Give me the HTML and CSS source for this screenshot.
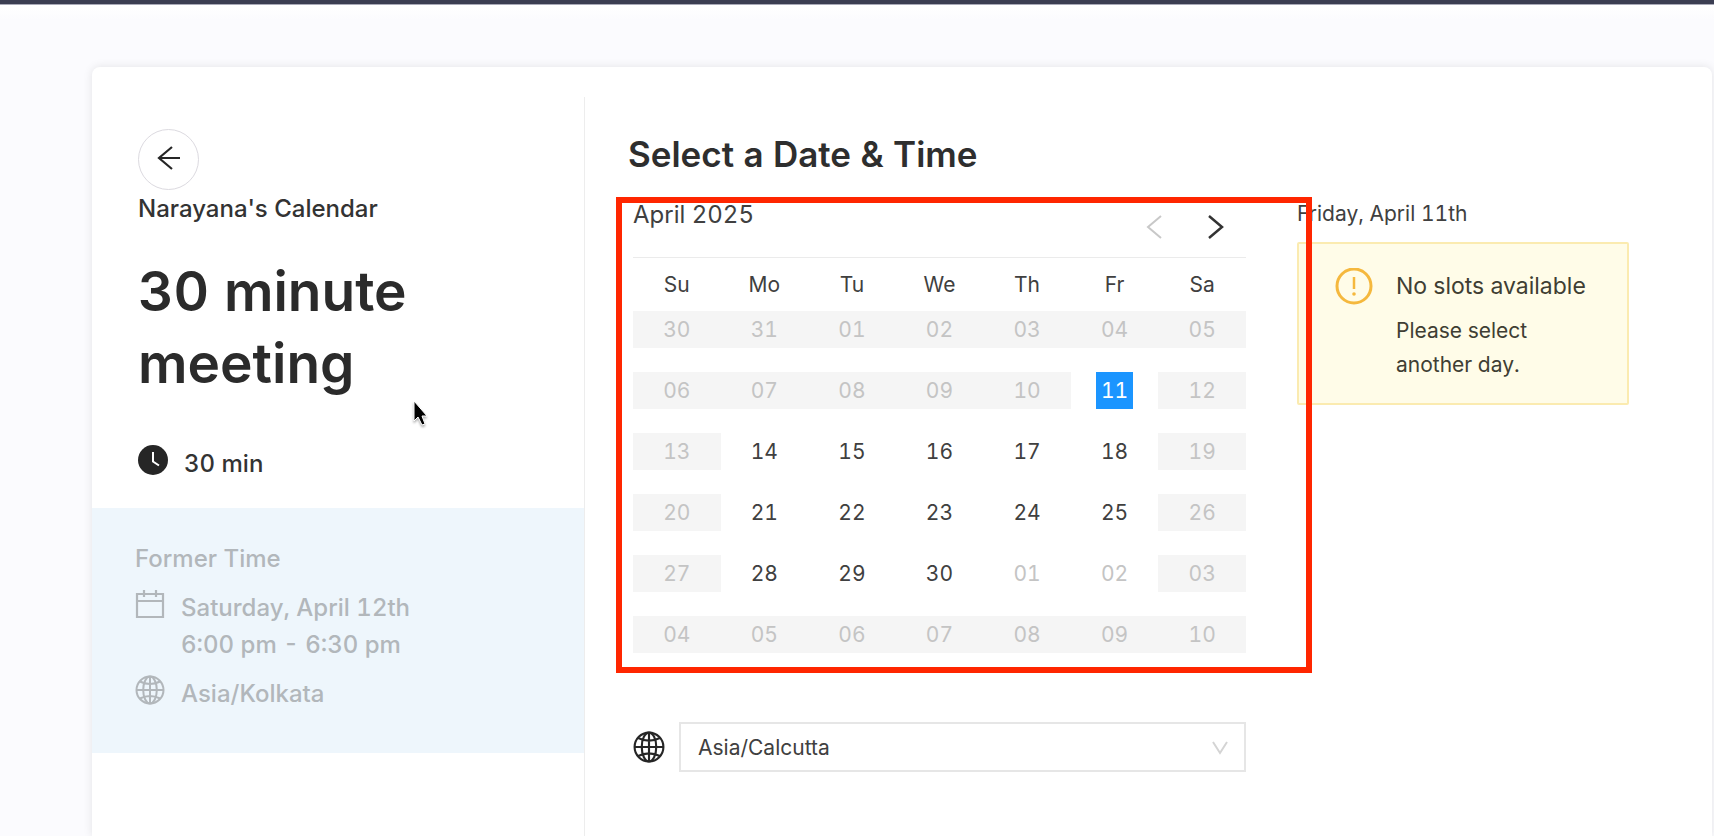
FILE: index.html
```html
<!DOCTYPE html>
<html lang="en">
<head>
  <meta charset="UTF-8" />
  <meta name="viewport" content="width=device-width, initial-scale=1" />
  <title>Select a Date &amp; Time</title>
  <link rel="stylesheet" href="styles.css">
</head>
<body>

  <!-- Shared icons -->
  <svg class="sprite" aria-hidden="true">
    <symbol id="icon-globe" viewBox="0 0 30 30">
      <g fill="none" stroke="currentColor" stroke-width="2">
        <circle cx="15" cy="15" r="13.5"/>
        <ellipse cx="15" cy="15" rx="6.8" ry="13.5"/>
        <path d="M15 1.5v27M1.5 15h27M4.8 6.5Q15 11.5 25.2 6.5M4.8 23.5Q15 18.5 25.2 23.5"/>
      </g>
    </symbol>
  </svg>

  <div class="top-bar"></div>

  <main class="card">
    <aside class="details">
      <div class="event">
        <button class="back-btn" aria-label="Back">
          <svg width="26" height="26" viewBox="0 0 26 26" fill="none" stroke="currentColor" stroke-width="2.200">
            <path d="M24 13H3M16 2L3 13l13 11"/>
          </svg>
        </button>
        <p class="owner">Narayana's Calendar</p>
        <h1>30 minute meeting</h1>
        <div class="duration">
          <svg width="30" height="30" viewBox="0 0 30 30">
            <circle cx="15" cy="15" r="15" fill="#262626"/>
            <path d="M15 7v9.500l6 4" fill="none" stroke="#fff" stroke-width="2"/>
          </svg>
          <span>30 min</span>
        </div>
      </div>

      <section class="former">
        <h2>Former Time</h2>
        <div class="former-row">
          <svg width="30" height="30" viewBox="0 0 30 30" fill="none" stroke="currentColor" stroke-width="2.200">
            <path d="M2 5h26v23H2zM2 12h26M9 1v7M21 1v7"/>
          </svg>
          <p>Saturday, April 12th<br>6:00 pm - 6:30 pm</p>
        </div>
        <div class="former-row">
          <svg width="30" height="30"><use href="#icon-globe"/></svg>
          <p>Asia/Kolkata</p>
        </div>
      </section>
    </aside>

    <section class="picker">
      <h2 class="picker-title">Select a Date &amp; Time</h2>

      <div class="picker-body">
        <div class="calendar-col">
          <div class="calendar">
            <div class="calendar-header">
              <span class="month">April 2025</span>
              <div class="arrows">
                <button aria-label="Previous month" disabled>
                  <svg width="16" height="24" viewBox="0 0 16 24" fill="none" stroke="currentColor" stroke-width="2"><path d="M15 1L2 12l13 11"/></svg>
                </button>
                <button aria-label="Next month">
                  <svg width="16" height="24" viewBox="0 0 16 24" fill="none" stroke="currentColor" stroke-width="2.500"><path d="M1 1l13 11L1 23"/></svg>
                </button>
              </div>
            </div>

            <table>
              <thead>
                <tr><th>Su</th><th>Mo</th><th>Tu</th><th>We</th><th>Th</th><th>Fr</th><th>Sa</th></tr>
              </thead>
              <tbody>
                <tr>
                  <td><button class="day off" disabled>30</button></td>
                  <td><button class="day off" disabled>31</button></td>
                  <td><button class="day off" disabled>01</button></td>
                  <td><button class="day off" disabled>02</button></td>
                  <td><button class="day off" disabled>03</button></td>
                  <td><button class="day off" disabled>04</button></td>
                  <td><button class="day off" disabled>05</button></td>
                </tr>
                <tr>
                  <td><button class="day off" disabled>06</button></td>
                  <td><button class="day off" disabled>07</button></td>
                  <td><button class="day off" disabled>08</button></td>
                  <td><button class="day off" disabled>09</button></td>
                  <td><button class="day off" disabled>10</button></td>
                  <td><button class="day selected">11</button></td>
                  <td><button class="day off" disabled>12</button></td>
                </tr>
                <tr>
                  <td><button class="day off" disabled>13</button></td>
                  <td><button class="day">14</button></td>
                  <td><button class="day">15</button></td>
                  <td><button class="day">16</button></td>
                  <td><button class="day">17</button></td>
                  <td><button class="day">18</button></td>
                  <td><button class="day off" disabled>19</button></td>
                </tr>
                <tr>
                  <td><button class="day off" disabled>20</button></td>
                  <td><button class="day">21</button></td>
                  <td><button class="day">22</button></td>
                  <td><button class="day">23</button></td>
                  <td><button class="day">24</button></td>
                  <td><button class="day">25</button></td>
                  <td><button class="day off" disabled>26</button></td>
                </tr>
                <tr>
                  <td><button class="day off" disabled>27</button></td>
                  <td><button class="day">28</button></td>
                  <td><button class="day">29</button></td>
                  <td><button class="day">30</button></td>
                  <td><button class="day next-month">01</button></td>
                  <td><button class="day next-month">02</button></td>
                  <td><button class="day off" disabled>03</button></td>
                </tr>
                <tr>
                  <td><button class="day off" disabled>04</button></td>
                  <td><button class="day off" disabled>05</button></td>
                  <td><button class="day off" disabled>06</button></td>
                  <td><button class="day off" disabled>07</button></td>
                  <td><button class="day off" disabled>08</button></td>
                  <td><button class="day off" disabled>09</button></td>
                  <td><button class="day off" disabled>10</button></td>
                </tr>
              </tbody>
            </table>
            <div class="highlight"></div>
          </div>

          <div class="timezone">
            <svg width="32" height="32"><use href="#icon-globe"/></svg>
            <div class="select-wrap">
              <select aria-label="Time zone">
                <option>Asia/Calcutta</option>
              </select>
              <svg class="chevron" width="16" height="14" viewBox="0 0 16 14" fill="none" stroke="currentColor" stroke-width="2"><path d="M1 1l7 11 7-11"/></svg>
            </div>
          </div>
        </div>

        <div class="slots">
          <p class="slots-date">Friday, April 11th</p>
          <div class="alert" role="status">
            <svg width="38" height="38" viewBox="0 0 38 38" fill="none" stroke="#f5b83d">
              <circle cx="19" cy="18" r="17" stroke-width="3"/>
              <path d="M19 9v12" stroke-width="2.500"/>
              <circle cx="19" cy="26" r="1.800" fill="#f5b83d" stroke="none"/>
            </svg>
            <div>
              <h3>No slots available</h3>
              <p>Please select another day.</p>
            </div>
          </div>
        </div>
      </div>
    </section>
  </main>

  <!-- Mouse pointer -->
  <svg class="pointer" width="18" height="28" viewBox="0 0 18 28" aria-hidden="true">
    <path d="M2 1v20l4-4 4 8 3-1-3-8h5z" fill="#000" stroke="#fff" stroke-width="1"/>
  </svg>

</body>
</html>
```

FILE: styles.css
```css
* {
  box-sizing: border-box;
}

body {
  margin: 0;
  min-height: 100vh;
  display: flex;
  flex-direction: column;
  overflow: hidden;
  background: linear-gradient(#fff 5px, #fbfbfe 20px);
  font-family: Inter, 'Liberation Sans', sans-serif;
  font-size: 22px;
  font-variant-numeric: tabular-nums;
  color: #404040;
}

h1, h2, h3, p {
  margin: 0;
}

button, select {
  font: inherit;
  font-variant-numeric: inherit;
  color: inherit;
  cursor: pointer;
}

svg {
  display: block;
  flex: none;
}

.sprite {
  position: absolute;
  width: 0;
  height: 0;
}

.top-bar {
  height: 5px;
  background: #3b3e52;
  border-bottom: 1px solid #a9aab8;
}

.card {
  flex: 1;
  display: flex;
  margin: 62px 2px 0 92px;
  background: #fff;
  border-radius: 8px 8px 0 0;
  box-shadow: 0 0 10px rgba(0, 0, 0, 0.1);
}

/* Left panel */
.details {
  flex: 0 0 492px;
}

.event {
  padding: 62px 46px 26px;
}

.back-btn {
  display: flex;
  align-items: center;
  justify-content: center;
  width: 61px;
  height: 61px;
  padding: 0 0 3px;
  border: 1px solid #dcdae0;
  border-radius: 50%;
  background: #fff;
  color: #262626;
}

.owner {
  margin-top: 1px;
  font-size: 24px;
  line-height: 36px;
  font-weight: 500;
  color: #333;
}

h1 {
  margin-top: 28px;
  font-size: 55px;
  line-height: 72px;
  font-weight: 600;
  color: #2b2b2b;
}

.duration {
  display: flex;
  gap: 16px;
  margin-top: 46px;
  font-size: 24px;
  line-height: 37px;
  font-weight: 500;
  color: #333;
}

.former {
  padding: 32px 43px 41px;
  background: #eef6fc;
  font-size: 24px;
  line-height: 37px;
  font-weight: 500;
  color: #b2b7bb;
}

.former h2 {
  font-size: inherit;
  font-weight: 500;
}

.former-row {
  display: flex;
  gap: 16px;
  margin-top: 12px;
}

/* Right panel */
.picker {
  flex: 1;
  margin-top: 30px;
  padding: 34px 83px 0 43px;
  border-left: 1px solid #ededed;
}

.picker-title {
  font-size: 35px;
  line-height: 46px;
  font-weight: 600;
  color: #2e2e2e;
}

.picker-body {
  display: flex;
  gap: 51px;
  margin-top: 20px;
  padding-left: 5px;
}

.calendar-col {
  flex: 1;
}

.calendar {
  position: relative;
}

.calendar-header {
  display: flex;
  justify-content: space-between;
  height: 61px;
  border-bottom: 1px solid #ebebeb;
}

.month {
  font-size: 24px;
  line-height: 36px;
}

.arrows {
  display: flex;
  gap: 46px;
  padding: 18px 22px 0 0;
}

.arrows button {
  height: 24px;
  padding: 0;
  border: none;
  background: none;
  color: #333;
}

.arrows button:disabled {
  color: #c8c8c8;
}

table {
  width: 100%;
  table-layout: fixed;
  border-collapse: collapse;
}

th {
  height: 41px;
  padding: 13px 0 0;
  font-size: 21px;
  line-height: 28px;
  font-weight: 400;
}

td {
  padding: 12px 0;
}

.day {
  display: block;
  width: 100%;
  height: 37px;
  padding: 0;
  border: none;
  background: none;
  font-size: 21px;
  line-height: 37px;
  text-align: center;
}

.day.next-month {
  color: #c4c4c4;
}

.day.off {
  background: #f5f5f5;
  color: #c4c4c4;
}

.day.selected {
  width: 37px;
  margin: 0 auto;
  background: #1b95ff;
  color: #fff;
}

/* Frame drawn over the calendar */
.highlight {
  position: absolute;
  inset: 0 -66px -8px -17px;
  border: 6px solid #ff2600;
  pointer-events: none;
  z-index: 2;
}

.timezone {
  display: flex;
  align-items: center;
  gap: 14px;
  margin-top: 57px;
  color: #262626;
}

.select-wrap {
  flex: 1;
  position: relative;
}

.timezone select {
  display: block;
  width: 100%;
  height: 50px;
  padding: 0 17px;
  border: 2px solid #e6e6e6;
  border-radius: 0;
  background: #fff;
  appearance: none;
  font-size: 21px;
  color: #404040;
}

.chevron {
  position: absolute;
  top: 19px;
  right: 18px;
  color: #d4d4d4;
  pointer-events: none;
}

.slots {
  flex: 0 0 332px;
}

.slots-date {
  font-size: 21px;
  line-height: 34px;
}

.alert {
  display: flex;
  gap: 23px;
  margin-top: 11px;
  padding: 24px 36px 21px;
  border: 2px solid #fbebb0;
  border-radius: 2px;
  background: #fffce8;
  color: #403e33;
}

.alert h3 {
  font-size: 23px;
  line-height: 36px;
  font-weight: 400;
  white-space: nowrap;
}

.alert p {
  margin-top: 10px;
  max-width: 150px;
  font-size: 21px;
  line-height: 34px;
}

.pointer {
  position: absolute;
  left: 412px;
  top: 400px;
  filter: drop-shadow(0 2px 1px rgba(0, 0, 0, 0.3));
}
```
